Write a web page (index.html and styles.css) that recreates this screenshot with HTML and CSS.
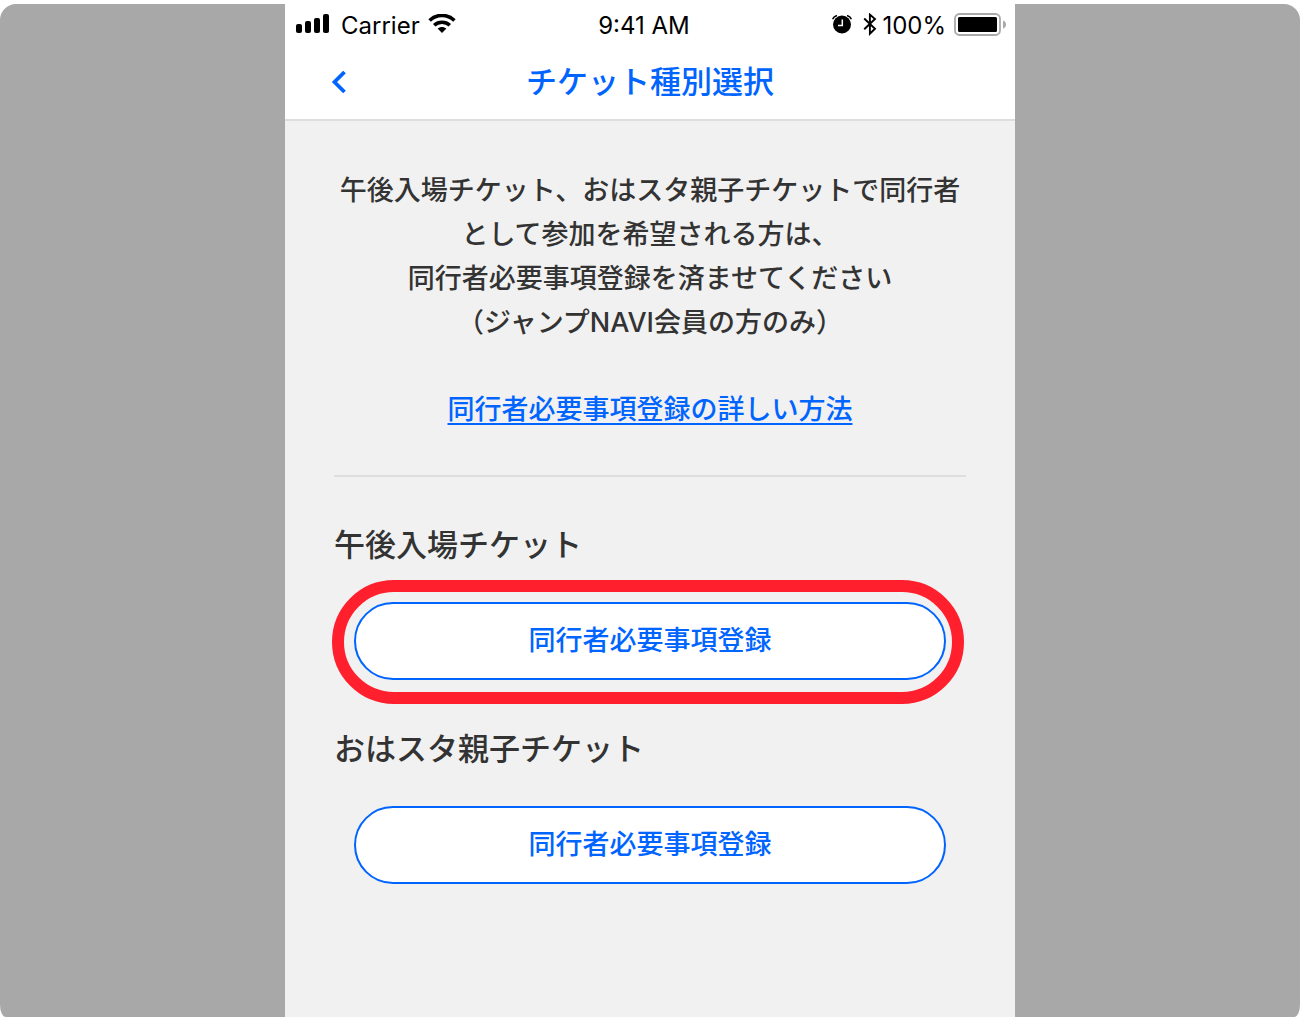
FILE: index.html
```html
<!DOCTYPE html>
<html lang="ja">
<head>
  <meta charset="UTF-8">
  <meta name="viewport" content="width=device-width, initial-scale=1.0">
  <title>チケット種別選択</title>
  <link rel="stylesheet" href="styles.css">
</head>
<body>
  <div class="stage">
    <div class="screen">
      <div class="status-bar">
        <div class="status-left">
          <svg width="33" height="20" viewBox="0 0 33 20">
            <rect x="0" y="10" width="6" height="9" rx="2"/>
            <rect x="9" y="7" width="6" height="12" rx="2"/>
            <rect x="18" y="4" width="6" height="15" rx="2"/>
            <rect x="27" y="0" width="6" height="19" rx="2"/>
          </svg>
          <span class="carrier">Carrier</span>
          <svg width="28" height="20" viewBox="0 0 28 20">
            <g fill="none" stroke="#000" stroke-width="3.6">
              <path d="M1.600 6.500 C8.500 -.3 19.500 -.3 26.400 6.500"/>
              <path d="M6.200 11.200 C10.500 7.200 17.500 7.200 21.800 11.200"/>
            </g>
            <path d="M9.600 14.600 C12.200 12.500 15.800 12.500 18.400 14.600 L14 19 Z"/>
          </svg>
        </div>
        <div class="status-time">9:41 AM</div>
        <div class="status-right">
          <svg width="20" height="20" viewBox="0 0 20 20">
            <circle cx="10" cy="9.500" r="9"/>
            <path d="M.6 4.200 Q1.600 1.500 5 .5 M19.400 4.200 Q18.400 1.500 15 .5" fill="none" stroke="#000" stroke-width="1.500"/>
            <path d="M10.300 4.500 V10.500 H6" fill="none" stroke="#fff" stroke-width="1.500"/>
          </svg>
          <svg class="bluetooth" width="14" height="24" viewBox="0 0 14 24">
            <path d="M1.200 5.500 L12 15.800 L6.900 20.800 V1.600 L12 6 L1.200 16.200" fill="none" stroke="#000" stroke-width="1.900"/>
          </svg>
          <span>100%</span>
          <svg class="battery" width="52" height="24" viewBox="0 0 52 24">
            <rect x="1" y="1" width="45" height="21" rx="4.500" fill="#fff" stroke="#a9a9a9" stroke-width="1.800"/>
            <rect x="4" y="4" width="39" height="15" rx="1.500"/>
            <path d="M49 7.500 Q52 8.500 52 11.500 T49 15.800 Z" fill="#a9a9a9"/>
          </svg>
        </div>
      </div>

      <header class="nav">
        <button type="button" class="back" aria-label="戻る">
          <svg width="16" height="24" viewBox="0 0 16 24">
            <path d="M13.500 2 L3.500 12 L13.500 22" fill="none" stroke="#0064ff" stroke-width="3.800"/>
          </svg>
        </button>
        <h1>チケット種別選択</h1>
      </header>

      <main class="content">
        <p class="notice">
          午後入場チケット、おはスタ親子チケットで同行者<br>
          として参加を希望される方は、<br>
          同行者必要事項登録を済ませてください<br>
          （ジャンプNAVI会員の方のみ）
        </p>
        <p class="more"><a href="#">同行者必要事項登録の詳しい方法</a></p>
        <hr>
        <section class="ticket">
          <h2>午後入場チケット</h2>
          <div class="action highlight">
            <button type="button">同行者必要事項登録</button>
          </div>
        </section>
        <section class="ticket">
          <h2>おはスタ親子チケット</h2>
          <div class="action">
            <button type="button">同行者必要事項登録</button>
          </div>
        </section>
      </main>
    </div>
  </div>
</body>
</html>
```
FILE: styles.css
```css
* {
  box-sizing: border-box;
}
body {
  margin: 0;
  padding-top: 4px;
  background: #fff;
  color: #333;
  font-family: Inter, "Noto Sans CJK JP", sans-serif;
}
h1, h2, p {
  margin: 0;
}
.stage {
  display: flex;
  justify-content: center;
  min-height: calc(100vh - 4px);
  background: #a8a8a8;
  border-radius: 16px 16px 6px 6px / 16px 16px 12px 12px;
}
.screen {
  width: 100%;
  max-width: 730px;
  background: #f1f1f1;
}

/* status bar */
.status-bar {
  display: grid;
  grid-template-columns: 1fr auto 1fr;
  align-items: center;
  height: 42px;
  padding: 0 9px 0 11px;
  background: #fff;
  color: #000;
  font-size: 24px;
}
.status-left, .status-right {
  display: flex;
  align-items: center;
}
.status-left svg {
  margin-bottom: 2px;
}
.carrier {
  margin: 0 8px 0 12px;
}
.status-time {
  margin-right: 14px;
}
.status-right {
  justify-content: flex-end;
}
.bluetooth {
  margin: 0 5px 0 11px;
}
.battery {
  margin-left: 8px;
}

/* navigation */
.nav {
  display: grid;
  grid-template-columns: 32px 1fr 32px;
  align-items: center;
  height: 75px;
  padding: 0 38px 2px;
  background: #fff;
  border-bottom: 2px solid #dedede;
}
.back {
  display: flex;
  justify-content: center;
  padding: 0;
  background: none;
  border: none;
  cursor: pointer;
}
.nav h1 {
  color: #0064ff;
  font-size: 31px;
  font-weight: 500;
  line-height: 48px;
  text-align: center;
}

/* content */
.content {
  padding: 48px 49px;
}
.notice, .more {
  font-size: 27px;
  font-weight: 500;
  line-height: 44px;
  text-align: center;
}
.notice {
  margin: 0 -20px;
}
.more {
  margin-top: 43px;
}
.more a {
  color: #0064ff;
  text-decoration-thickness: 2px;
  text-underline-offset: 4px;
}
hr {
  margin: 43px 0 45px;
  border: none;
  border-top: 2px solid #dedede;
}
.ticket {
  margin-bottom: 46px;
}
.ticket h2 {
  font-size: 31px;
  font-weight: 500;
  line-height: 46px;
}
.action {
  position: relative;
  margin: 34px 20px 0;
}
.action button {
  display: block;
  width: 100%;
  height: 78px;
  padding: 0 0 6px;
  background: #fff;
  border: 2px solid #0064ff;
  border-radius: 39px;
  color: #0064ff;
  font-family: inherit;
  font-size: 27px;
  font-weight: 500;
  cursor: pointer;
}
.highlight::after {
  content: "";
  position: absolute;
  inset: -22px -18px -24px -22px;
  border: 12px solid #ff1f2d;
  border-radius: 62px;
  pointer-events: none;
}
```
